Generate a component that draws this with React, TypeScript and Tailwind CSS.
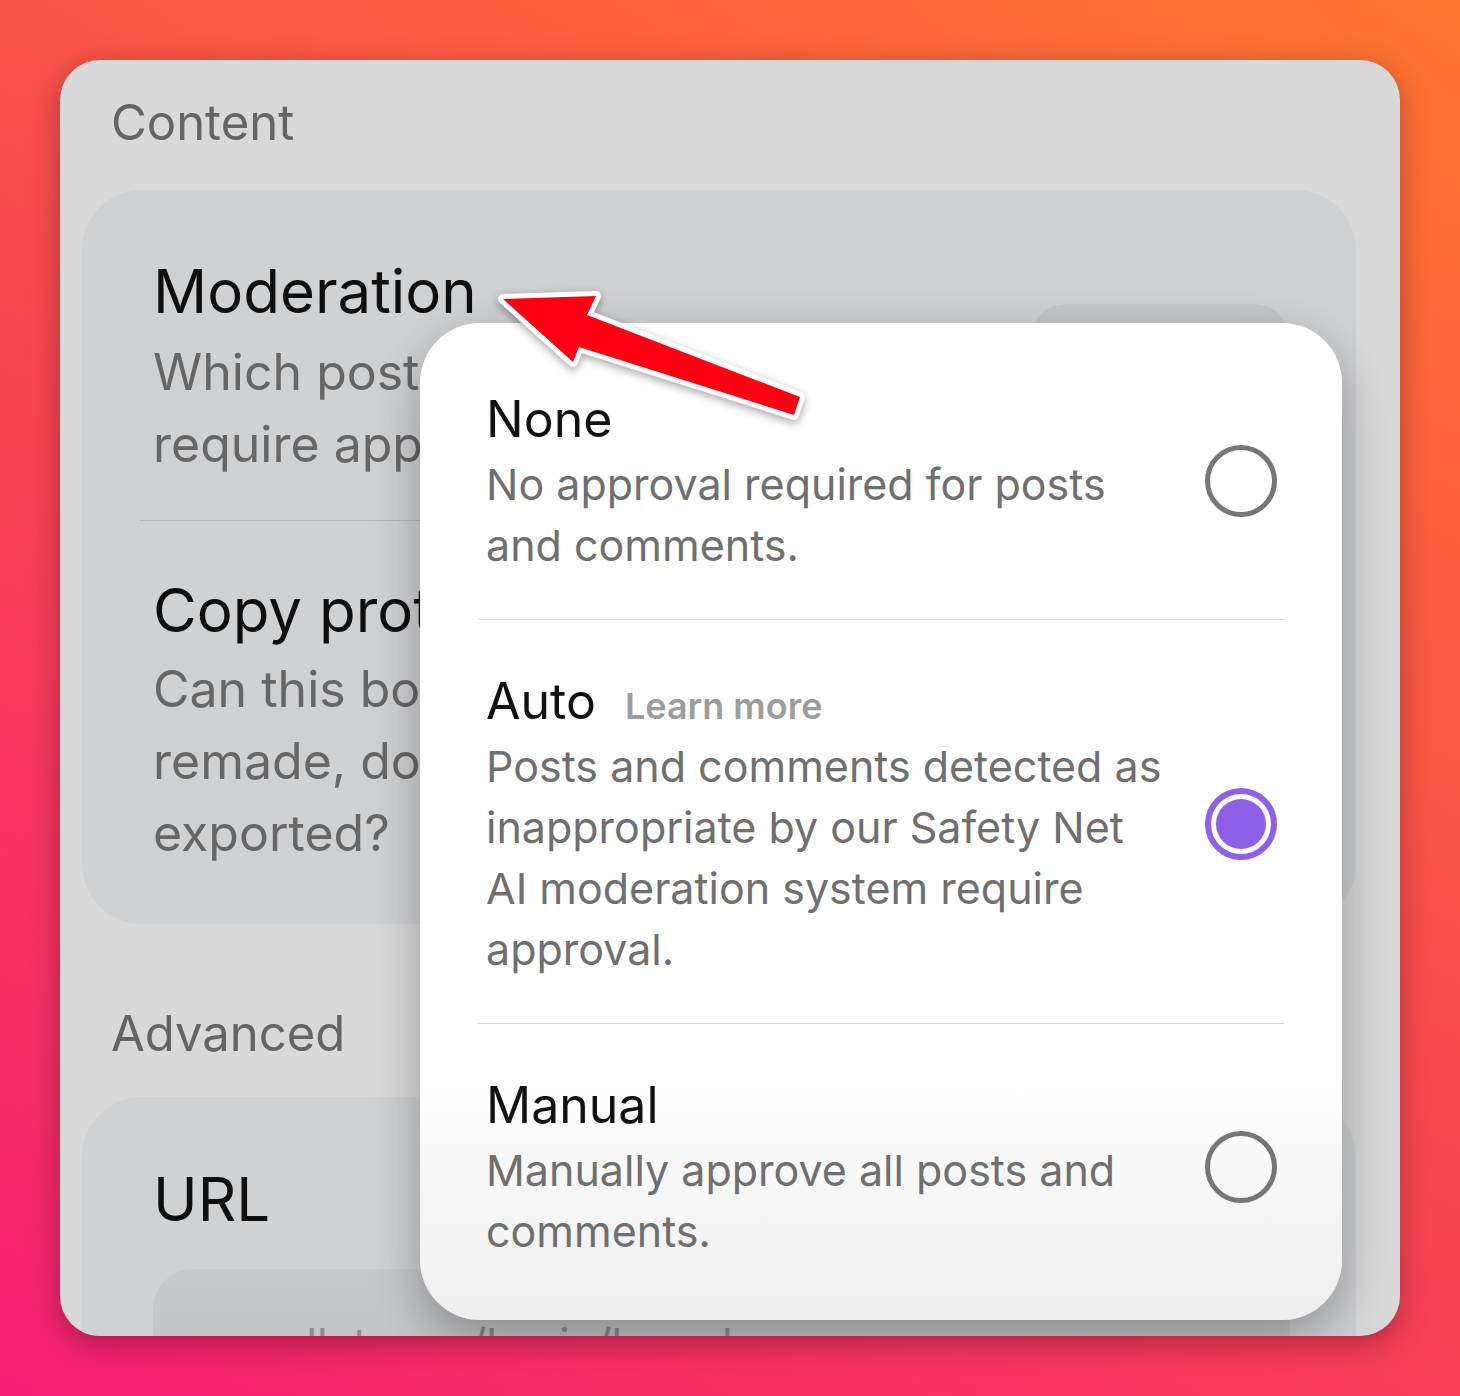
import React from "react";

const options = [
  {
    id: "none",
    title: "None",
    lines: ["No approval required for posts", "and comments."],
    checked: false,
  },
  {
    id: "auto",
    title: "Auto",
    learnMore: true,
    lines: [
      "Posts and comments detected as",
      "inappropriate by our Safety Net",
      "AI moderation system require",
      "approval.",
    ],
    checked: true,
  },
  {
    id: "manual",
    title: "Manual",
    lines: ["Manually approve all posts and", "comments."],
    checked: false,
  },
];

function Radio({ checked }: { checked: boolean }) {
  if (checked) {
    return (
      <div className="flex h-[72px] w-[72px] shrink-0 items-center justify-center rounded-full border-[6px] border-[#8f5fe8] bg-white">
        <div className="h-[50px] w-[50px] rounded-full bg-[#8f5fe8]" />
      </div>
    );
  }
  return <div className="h-[72px] w-[72px] shrink-0 rounded-full border-[5px] border-[#767676]" />;
}

export default function App() {
  return (
    <div className="relative h-[1396px] w-[1460px] overflow-hidden bg-linear-[30deg] from-[#f51f72] via-[#f8484f] to-[#ff7630] p-[60px] font-[Inter,sans-serif]">
      {/* Settings card (dimmed behind the menu) */}
      <div className="relative h-[1276px] w-[1340px] overflow-hidden rounded-[40px] bg-[#d9d9d9] pl-[22px] pr-[44px] shadow-[0_8px_30px_rgba(0,0,0,0.3)]">
        <h2 className="pl-[29px] pt-[32px] text-[49px] leading-[62px] text-[#646464]">Content</h2>

        <div className="mt-[36px] rounded-[60px] bg-[#d0d1d3] px-[58px] pt-[65px] pb-[55px]">
          <div className="flex justify-between pl-[13px] pr-[8px] pb-[40px]">
            <div className="whitespace-nowrap">
              <h3 className="text-[60px] leading-[72px] text-[#0e0e0e]">Moderation</h3>
              <p className="mt-[9px] text-[50px] leading-[72px] text-[#666666]">
                Which posts and comments
                <br />
                require approval?
              </p>
            </div>
            <div className="mt-[49px] h-[110px] w-[260px] shrink-0 rounded-[36px] bg-[#c5c6c8]" />
          </div>
          <div className="h-px bg-[#b4b5b7]" />
          <div className="pl-[13px] pr-[8px] pt-[53px] whitespace-nowrap">
            <h3 className="text-[60px] leading-[72px] text-[#0e0e0e]">Copy protection</h3>
            <p className="mt-[7px] text-[50px] leading-[72px] text-[#666666]">
              Can this board be copied,
              <br />
              remade, downloaded, or
              <br />
              exported?
            </p>
          </div>
        </div>

        <h2 className="mt-[79px] pl-[29px] text-[49px] leading-[62px] text-[#646464]">Advanced</h2>

        <div className="mt-[32px] rounded-[60px] bg-[#d0d1d3] pl-[71px] pr-[66px] pt-[66px]">
          <h3 className="text-[60px] leading-[72px] text-[#0e0e0e]">URL</h3>
          <div className="mt-[34px] h-[200px] rounded-[40px] bg-linear-to-b from-[#c8c9cb] to-[#bdbec0] pl-[85px] pt-[47px]">
            <span className="text-[44px] leading-[56px] text-[#8c8c8c]">padlet.com/kevin/board</span>
          </div>
        </div>

        {/* Moderation menu */}
        <div className="absolute left-[360px] top-[263px] w-[922px] rounded-[60px] bg-linear-to-b from-white from-75% to-[#eeeeee] px-[58px] pt-[15px] pb-[15px] shadow-[0_18px_50px_rgba(0,0,0,0.3)]">
          {options.map((o, i) => (
            <div
              key={o.id}
              className={`flex items-center justify-between pl-[8px] pr-[7px] pt-[48px] pb-[43px] ${
                i > 0 ? "border-t border-[#d6d6d6]" : ""
              }`}
            >
              <div className="whitespace-nowrap">
                <div className="flex items-baseline gap-[29px]">
                  <span className="text-[50px] leading-[66px] text-[#111111]">{o.title}</span>
                  {o.learnMore && (
                    <span className="text-[36px] font-semibold text-[#9c9c9c]">Learn more</span>
                  )}
                </div>
                <p className="mt-[2px] text-[43px] leading-[61px] text-[#6f6f6f]">
                  {o.lines.map((l, j) => (
                    <span key={j} className="block">
                      {l}
                    </span>
                  ))}
                </p>
              </div>
              <Radio checked={o.checked} />
            </div>
          ))}
        </div>
      </div>

      {/* Red annotation arrow */}
      <svg
        className="pointer-events-none absolute inset-0 h-full w-full drop-shadow-[0_3px_4px_rgba(0,0,0,0.35)]"
        viewBox="0 0 1460 1396"
      >
        <polygon
          points="503,299 596,296 587,315 800,397 794,415 579,347 573,362"
          fill="#ff0012"
          stroke="#ffffff"
          strokeWidth="10"
          strokeLinejoin="round"
          paintOrder="stroke"
        />
      </svg>
    </div>
  );
}
